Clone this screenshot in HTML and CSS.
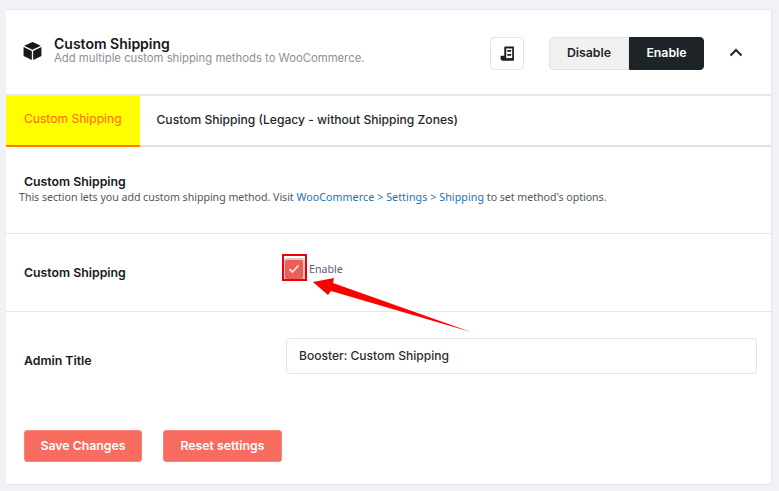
FILE: index.html
```html
<!DOCTYPE html>
<html lang="en">
<head>
<meta charset="utf-8">
<title>Custom Shipping</title>
<link rel="stylesheet" href="styles.css">
</head>
<body>
<main class="card">
  <header class="head">
    <svg class="cube" viewBox="0 0 20 20" width="19" height="20"><path d="M10 .5 18.800 4.600 10 8.700 1.200 4.600Z"/><path d="M.6 5.800 9.300 9.900V19.600L.6 15.300Z"/><path d="M19.400 5.800 10.700 9.900V19.600L19.400 15.300Z"/></svg>
    <div class="head-text">
      <h1>Custom Shipping</h1>
      <p>Add multiple custom shipping methods to WooCommerce.</p>
    </div>
    <button class="doc-btn" aria-label="Documentation">
      <svg viewBox="0 0 14 14" width="15" height="15"><path class="doc-fill" d="M4 1.500a1 1 0 0 1 1-1h8v12.500a.8.800 0 0 1-.8.800H2.500A2.200 2.200 0 0 1 .5 11.500V9.500a.5.500 0 0 1 .5-.5H4Z"/><path class="doc-cut" d="M5.800 2.300h5.600v9H5.800z"/><path class="doc-fill" d="M6.800 3.800h3.600v1.500H6.800zM6.800 7.500h3.600V9H6.800z"/></svg>
    </button>
    <div class="toggle">
      <button class="off">Disable</button>
      <button class="on">Enable</button>
    </div>
    <svg class="chev" viewBox="0 0 14 9" width="14" height="9"><path d="M1.500 7.500 7 2l5.500 5.500"/></svg>
  </header>

  <nav class="tabs">
    <a class="tab active">Custom Shipping</a>
    <a class="tab">Custom Shipping (Legacy - without Shipping Zones)</a>
  </nav>

  <section class="intro">
    <h2>Custom Shipping</h2>
    <p>This section lets you add custom shipping method. Visit <a>WooCommerce &gt; Settings &gt; Shipping</a> to set method's options.</p>
  </section>

  <section class="row row-check">
    <h2 class="label">Custom Shipping</h2>
    <label class="check-wrap">
      <span class="check"><svg viewBox="0 0 12 10" width="12" height="10"><path d="M1.500 5.200 4.500 8l6-6.500"/></svg></span>
      <span class="check-text">Enable</span>
    </label>
  </section>

  <section class="row row-title">
    <h2 class="label">Admin Title</h2>
    <input class="text" type="text" value="Booster: Custom Shipping">
  </section>

  <footer class="actions">
    <button class="cta">Save Changes</button>
    <button class="cta wide">Reset settings</button>
  </footer>
</main>

<svg class="arrow" viewBox="0 0 779 491" width="779" height="491" aria-hidden="true">
  <rect x="283" y="255" width="23" height="25" fill="none" stroke="#e8000c" stroke-width="2"/>
  <path d="M313 282 334 278 333 283 471 332 331 291 328 295Z" fill="#f00"/>
</svg>
</body>
</html>
```
FILE: styles.css
```css
* { box-sizing: border-box; }
html, body { margin: 0; height: 100%; }
body { width: 779px; height: 491px; background: #f1f2f5; font-family: Inter, sans-serif; overflow: hidden; position: relative; padding: 9px 7px 0 6px; }
button { font-family: inherit; cursor: pointer; }
h1, h2, p { margin: 0; }

.card { height: 476px; background: #fff; border: 1px solid #e4e5e7; border-left: 0; border-top-color: #e6e7e9; border-radius: 0 3px 4px 3px; }

.head { height: 86px; display: flex; align-items: center; padding: 0 28px 0 17px; border-bottom: 2px solid #e6e7e9; }
.cube { fill: #16191d; margin-right: 12px; margin-top: -2px; }
.head-text { flex: 1; margin-top: -3px; }
.head-text h1 { font-size: 14px; line-height: 15px; font-weight: 600; color: #14181d; }
.head-text p { font-size: 11.300px; line-height: 14px; color: #8d9095; }
.doc-btn { width: 34px; height: 33px; margin-right: 25px; padding: 0; display: flex; align-items: center; justify-content: center; background: #fff; border: 1px solid #e2e3e5; border-radius: 4px; margin-top: 2px; }
.doc-fill { fill: #1a1d21; }
.doc-cut { fill: #fff; }
.toggle { display: flex; height: 33px; margin-right: 25px; margin-top: 2px; }
.toggle button { height: 33px; font-size: 12.300px; font-weight: 600; border: 1px solid #e2e3e5; padding: 0 0 1px; }
.off { width: 80px; background: #f1f1f1; color: #22262a; border-radius: 4px 0 0 4px; }
.toggle .on { width: 75px; background: #1d2327; color: #fff; border-color: #1d2327; border-radius: 0 4px 4px 0; }
.chev { fill: none; stroke: #1d2327; stroke-width: 2; }

.tabs { display: flex; height: 51px; border-bottom: 2px solid #dfe0e2; }
.tab { display: flex; align-items: center; height: 51px; padding: 0 17px 4px 16.500px; font-size: 12.100px; font-weight: 500; color: #23272c; }
.tab.active { width: 134px; padding: 0 0 4px 18px; background: #ff0; color: #ff6a00; border-bottom: 2px solid #ff7a00; font-weight: 400; }

.intro { height: 87px; padding: 27px 0 0 18px; border-bottom: 1px solid #e6e7e9; }
h2 { font-size: 12.300px; font-weight: 600; color: #16191d; line-height: 15px; }
.intro p { margin-left: -5px; font-family: "Noto Sans", sans-serif; font-size: 10.650px; line-height: 17px; letter-spacing: -.04px; color: #50575e; }
.intro a { color: #2271b1; letter-spacing: .09px; }

.row { display: flex; padding-left: 18px; border-bottom: 1px solid #e6e7e9; }
.label { width: 262px; }
.row-check { height: 78px; padding-top: 31px; }
.check-wrap { display: flex; align-items: center; height: 22px; margin-top: -7px; margin-left: -3px; }
.check { width: 22px; height: 23px; display: flex; align-items: center; justify-content: center; background: #ef5d57; border: 2px solid #d6c9c9; border-radius: 4px; margin-right: 4px; }
.check svg { fill: none; stroke: #f9e3e1; stroke-width: 1.800; }
.check-text { font-family: "Noto Sans", sans-serif; font-size: 10.650px; color: #5a6170; margin-top: 0; }

.row-title { height: 89px; padding-top: 26px; border-bottom: 0; align-items: flex-start; }
.row-title .label { margin-top: 15px; }
.text { width: 471px; height: 36px; padding: 0 12px 2px; border: 1px solid #e3e4e6; border-radius: 4px; background: #fff; font-family: Inter, sans-serif; font-size: 12.050px; font-weight: 500; color: #2a2e33; }

.actions { display: flex; gap: 21px; padding: 29px 0 0 18px; }
.cta { width: 118px; height: 32px; padding: 0 0 2px; background: #f76c5e; color: #fff; border: 1px solid #f88478; border-radius: 3px; font-size: 12.300px; font-weight: 600; }
.cta.wide { width: 119px; }

.arrow { position: absolute; left: 0; top: 0; pointer-events: none; }
```
